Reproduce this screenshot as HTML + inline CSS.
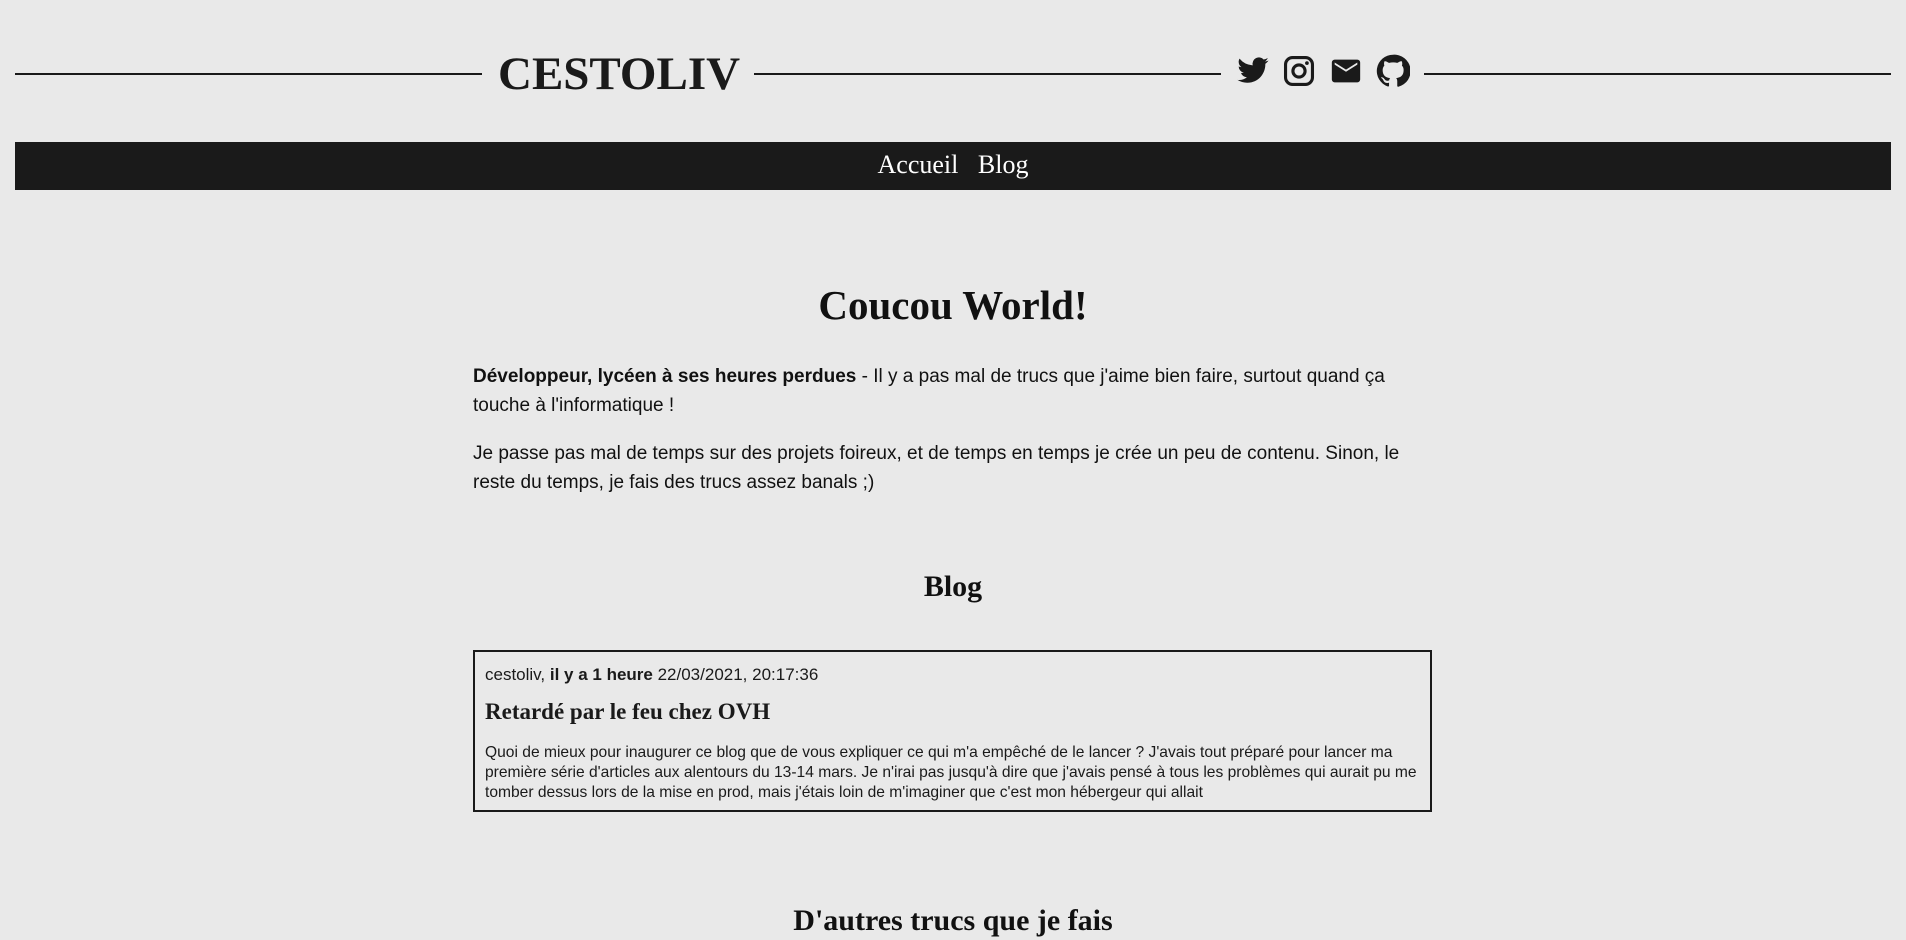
<!DOCTYPE html>
<html><head><meta charset="utf-8"><style>
body{margin:0;background:#e9e9e9;color:#1a1a1a;font-family:"Liberation Sans",sans-serif;width:1906px;height:928px;overflow:hidden;position:relative}
.abs{position:absolute}
.line{position:absolute;top:73px;height:2px;background:#1a1a1a}
.serif{font-family:"Liberation Serif",serif;font-weight:bold}
.c{position:absolute;left:0;width:1906px;text-align:center}
p{margin:0}
</style></head><body>
<div class="line" style="left:15px;width:467px"></div>
<div class="abs serif" style="left:498px;top:46px;width:240px;text-align:center;font-size:47px;line-height:56px;letter-spacing:0px">CESTOLIV</div>
<div class="line" style="left:754px;width:467px"></div>
<div class="line" style="left:1424px;width:467px"></div>
<svg class="abs" style="left:1236px;top:54px" width="34" height="34" viewBox="0 0 24 24"><path fill="#1a1a1a" d="M23 4.6c-.8.4-1.7.6-2.6.7.9-.6 1.6-1.4 2-2.5-.9.5-1.9.9-2.9 1.1A4.5 4.5 0 0 0 11.8 8 12.8 12.8 0 0 1 2.5 3.3a4.5 4.5 0 0 0 1.4 6 4.4 4.4 0 0 1-2-.6 4.5 4.5 0 0 0 3.6 4.5 4.5 4.5 0 0 1-2 .1 4.5 4.5 0 0 0 4.2 3.1A9 9 0 0 1 1 18.3 12.8 12.8 0 0 0 7.9 20.3c8.3 0 12.8-6.9 12.8-12.8v-.6c.9-.6 1.7-1.4 2.3-2.3z"/></svg>
<svg class="abs" style="left:1282px;top:54px" width="34" height="34" viewBox="0 0 24 24"><rect x="2.5" y="2.5" width="19" height="19" rx="5" fill="none" stroke="#1a1a1a" stroke-width="2.2"/><circle cx="12" cy="12" r="4.3" fill="none" stroke="#1a1a1a" stroke-width="2.2"/><circle cx="17.6" cy="6.4" r="1.3" fill="#1a1a1a"/></svg>
<svg class="abs" style="left:1329px;top:54px" width="34" height="34" viewBox="0 0 24 24"><path fill="#1a1a1a" d="M4 4h16a2 2 0 0 1 2 2v12a2 2 0 0 1-2 2H4a2 2 0 0 1-2-2V6a2 2 0 0 1 2-2zm0 3.5 8 5 8-5V6l-8 5-8-5z"/></svg>
<svg class="abs" style="left:1376px;top:54px" width="34" height="34" viewBox="0 0 24 24"><path fill="#1a1a1a" d="M12 .5a11.5 11.5 0 0 0-3.6 22.4c.6.1.8-.3.8-.6v-2c-3.2.7-3.9-1.5-3.9-1.5-.5-1.3-1.3-1.7-1.3-1.7-1-.7.1-.7.1-.7 1.2.1 1.8 1.2 1.8 1.200 1 1.8 2.7 1.3 3.4 1 .1-.8.4-1.3.7-1.6-2.6-.3-5.300-1.3-5.300-5.7 0-1.3.5-2.3 1.2-3.1-.1-.3-.5-1.5.1-3.1 0 0 1-.3 3.2 1.2a11 11 0 0 1 5.8 0c2.2-1.5 3.2-1.2 3.2-1.2.6 1.6.2 2.8.1 3.1.8.8 1.2 1.8 1.2 3.1 0 4.4-2.7 5.4-5.3 5.7.4.4.8 1.1.8 2.2v3.3c0 .3.2.7.8.6A11.5 11.5 0 0 0 12 .5z"/></svg>
<div class="abs" style="left:15px;top:142px;width:1876px;height:48px;background:#1a1a1a"></div>
<div class="c" style="top:149px;font-family:'Liberation Serif',serif;font-size:26px;line-height:32px;color:#fff">Accueil&nbsp;&nbsp;&nbsp;Blog</div>
<div class="c serif" style="top:280px;font-size:41px;line-height:50px;color:#111">Coucou World!</div>
<div class="abs" style="left:473px;top:362px;width:960px;font-size:19px;line-height:29px;color:#111">
<p><span style="font-weight:600">Développeur, lycéen à ses heures perdues</span> - Il y a pas mal de trucs que j'aime bien faire, surtout quand ça touche à l'informatique !</p>
<p style="margin-top:19px">Je passe pas mal de temps sur des projets foireux, et de temps en temps je crée un peu de contenu. Sinon, le reste du temps, je fais des trucs assez banals ;)</p>
</div>
<div class="c serif" style="top:568px;font-size:30px;line-height:38px;color:#111">Blog</div>
<div class="abs" style="left:473px;top:650px;width:955px;height:158px;border:2px solid #1a1a1a">
<div class="abs" style="left:10px;top:13px;font-size:17px;line-height:20px">cestoliv, <span style="font-weight:600">il y a 1 heure</span> 22/03/2021, 20:17:36</div>
<div class="abs serif" style="left:10px;top:45px;font-size:23px;line-height:30px">Retardé par le feu chez OVH</div>
<div class="abs" style="left:10px;top:91px;width:935px;font-size:15.6px;line-height:20px">Quoi de mieux pour inaugurer ce blog que de vous expliquer ce qui m'a empêché de le lancer ? J'avais tout préparé pour lancer ma première série d'articles aux alentours du 13-14 mars. Je n'irai pas jusqu'à dire que j'avais pensé à tous les problèmes qui aurait pu me tomber dessus lors de la mise en prod, mais j'étais loin de m'imaginer que c'est mon hébergeur qui allait</div>
</div>
<div class="c serif" style="top:902px;font-size:30px;line-height:38px;color:#111">D'autres trucs que je fais</div>
</body></html>
